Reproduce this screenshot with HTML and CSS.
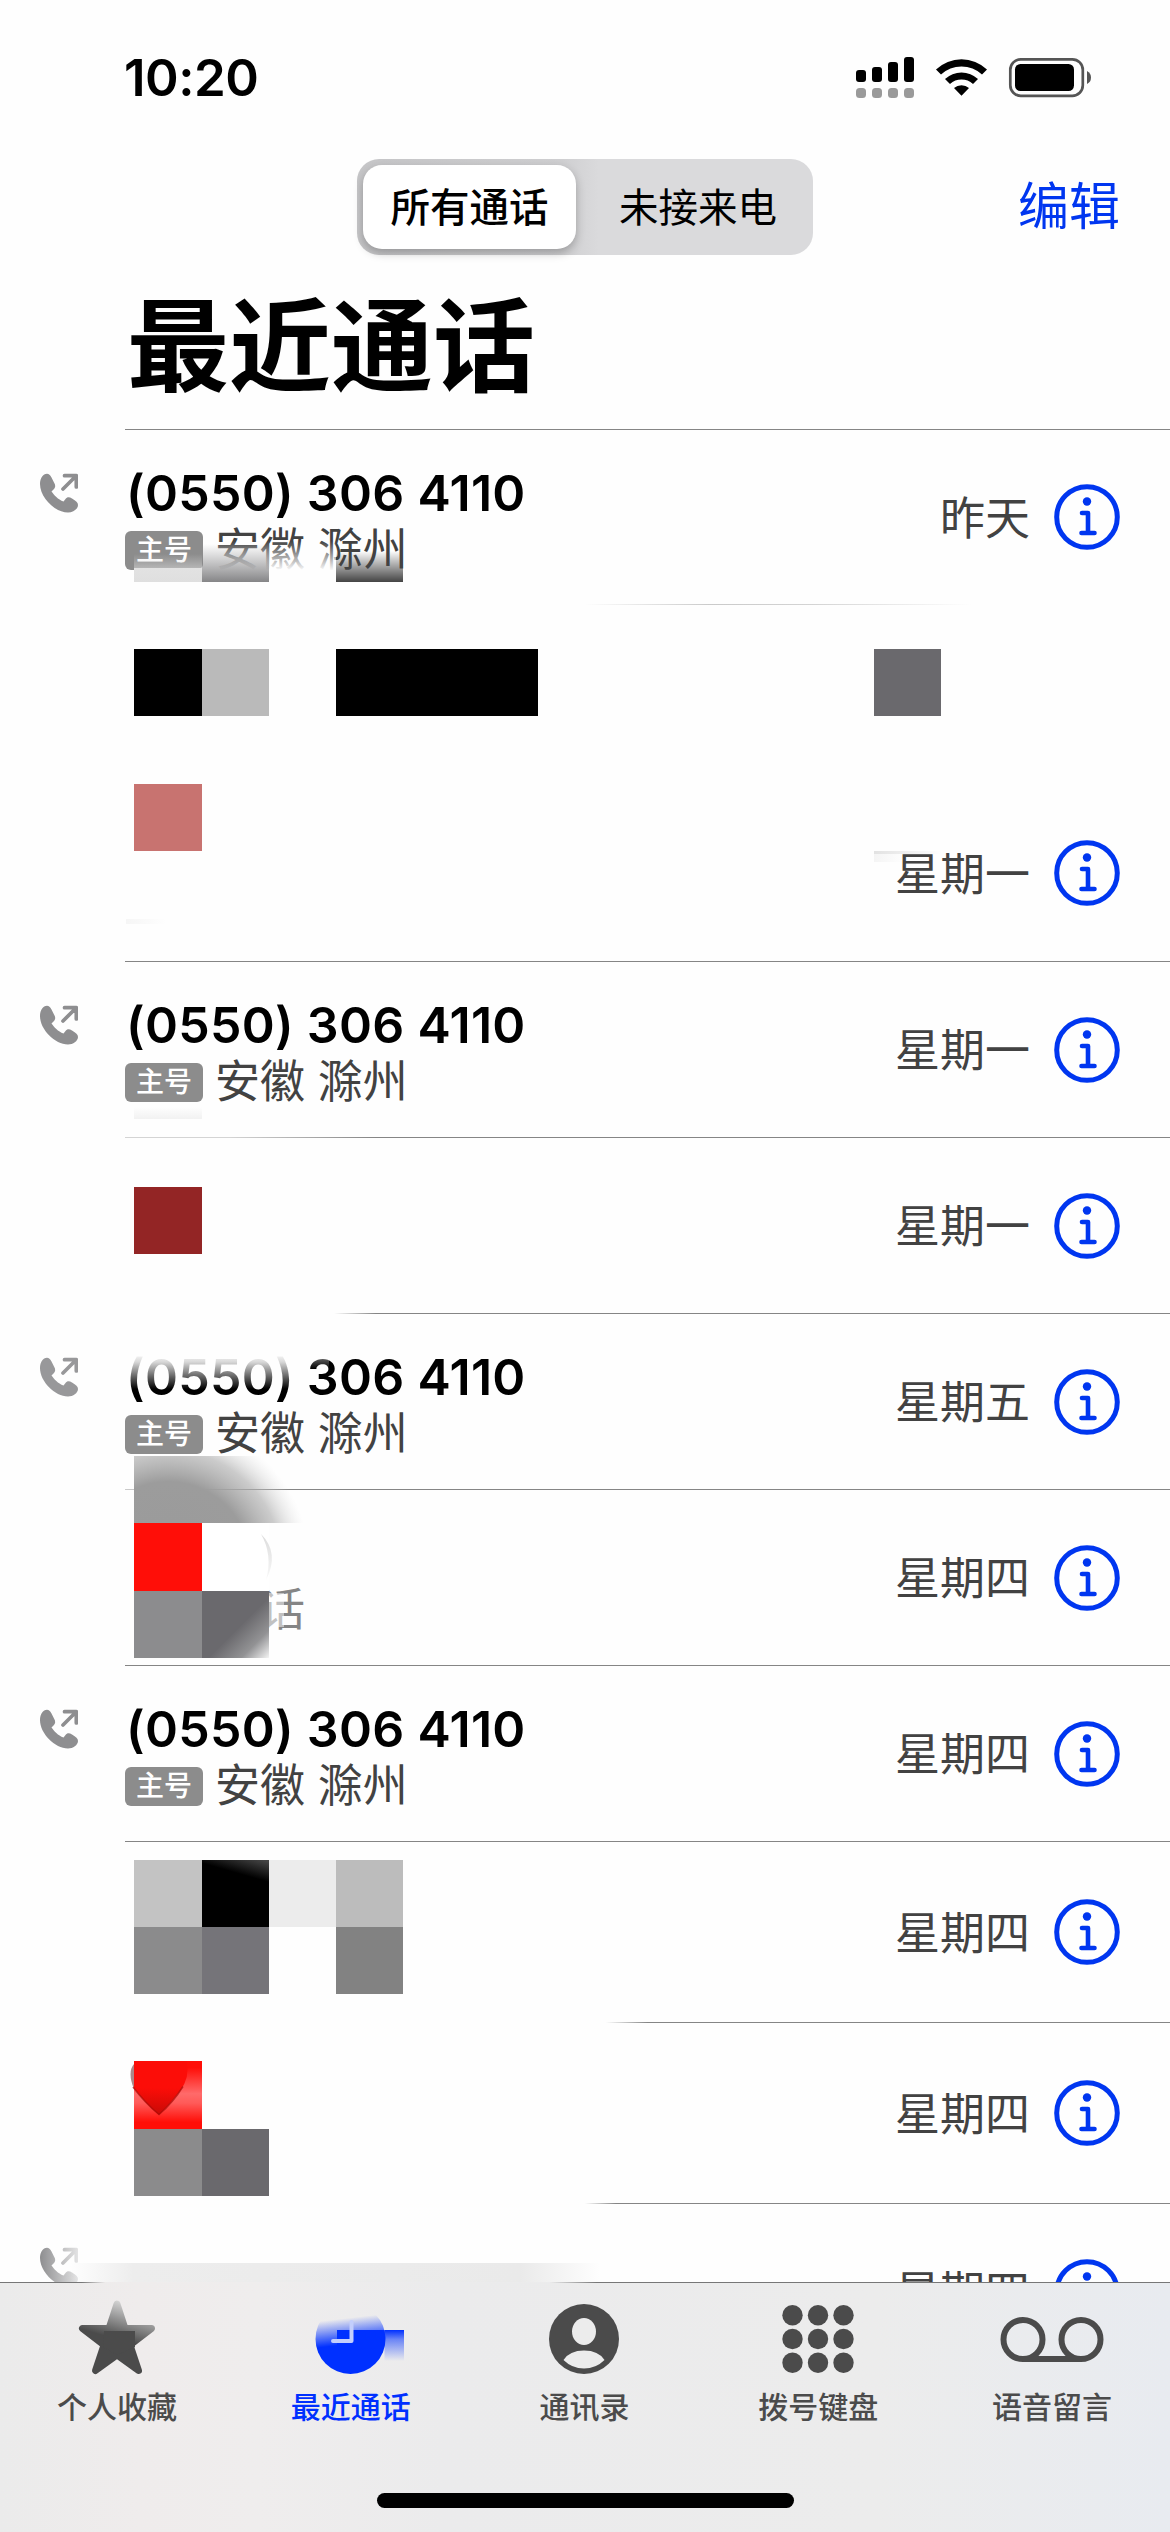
FILE: index.html
```html
<!DOCTYPE html>
<html lang="zh-CN">
<head>
    <meta charset="UTF-8">
    <meta name="viewport" content="width=device-width, initial-scale=1.0">
    <title>最近通话</title>
    <link rel="stylesheet" href="styles.css">
</head>
<body>
    <!-- Shared icons -->
    <svg class="defs" width="0" height="0">
        <symbol id="icon-outgoing" viewBox="0 0 38 39">
            <path fill="currentColor" d="M7 .3C3 .3 0 5 0 10.5 0 24 15 39 28 39c5 0 10-3.5 10-7.500 0-2.500-2-4-6-6.500-3-2-5-1.500-6.500.5L23.500 28C18 26 14 21.500 11.500 18l2-2c2-2 2.300-4 .5-7l-2.500-5C10 1.500 9 .3 7 .3z"/>
            <path fill="none" stroke="currentColor" stroke-width="3.700" stroke-linecap="round" stroke-linejoin="round" d="M23 15.500L36 2.500M24.500 2.200h11.800v11.300"/>
        </symbol>
        <symbol id="icon-info" viewBox="0 0 66 66">
            <circle cx="33" cy="33" r="30.300" fill="none" stroke="currentColor" stroke-width="5"/>
            <circle cx="33" cy="17.500" r="4.200" fill="currentColor"/>
            <path fill="none" stroke="currentColor" stroke-width="4.600" stroke-linecap="round" stroke-linejoin="round" d="M28 29h6v19.500M27.500 49h13"/>
        </symbol>
    </svg>

    <div class="status-bar">
        <div class="time">10:20</div>
        <svg class="status-icons" width="237" height="44" viewBox="0 0 237 44">
            <g>
                <rect x="1" y="15" width="10" height="12" rx="3"/>
                <rect x="17" y="12" width="10" height="15" rx="3"/>
                <rect x="33" y="7" width="10" height="20" rx="3"/>
                <rect x="49" y="2" width="10" height="25" rx="3"/>
            </g>
            <g fill="#9a9a9a">
                <rect x="1" y="33" width="10" height="10" rx="3.500"/>
                <rect x="17" y="33" width="10" height="10" rx="3.500"/>
                <rect x="33" y="33" width="10" height="10" rx="3.500"/>
                <rect x="49" y="33" width="10" height="10" rx="3.500"/>
            </g>
            <path d="M81 14.500a37 37 0 0 1 51 0l-5 5a30 30 0 0 0-41 0zM90 24a24 24 0 0 1 33 0l-5 5a17 17 0 0 0-23 0zM99 33a11.500 11.500 0 0 1 15 0l-7.500 7.800z"/>
            <rect x="155.300" y="4.300" width="72.500" height="36.500" rx="10.500" fill="none" stroke="#555" stroke-width="2.700"/>
            <rect x="160" y="9" width="59" height="27" rx="5.500"/>
            <path d="M232 16q4 2 4 6.500t-4 6.500z" fill="#555"/>
        </svg>
    </div>

    <div class="nav-bar">
        <div class="segmented">
            <div class="segment active">所有通话</div>
            <div class="segment">未接来电</div>
        </div>
        <div class="edit">编辑</div>
    </div>

    <h1>最近通话</h1>

    <div class="call-list">
        <div class="call">
            <div class="call-type"><svg><use href="#icon-outgoing"/></svg></div>
            <div class="call-body">
                <div class="call-main">
                    <div class="number">(0550) 306 4110</div>
                    <div class="place"><span class="badge">主号</span>安徽 滁州</div>
                </div>
                <div class="date">昨天</div>
                <svg class="info"><use href="#icon-info"/></svg>
            </div>
            <svg class="mosaic" viewBox="0 0 1170 175">
                <defs>
                    <linearGradient id="fade-white" x2="0" y2="1">
                        <stop offset="0" stop-color="#fefefe" stop-opacity="0"/>
                        <stop offset="1" stop-color="#fefefe"/>
                    </linearGradient>
                    <linearGradient id="fade-light" x2="0" y2="1">
                        <stop offset="0" stop-color="#dedede" stop-opacity="0"/>
                        <stop offset="1" stop-color="#dfdfdf"/>
                    </linearGradient>
                    <linearGradient id="fade-mid" x2="0" y2="1">
                        <stop offset="0" stop-color="#8e8e90" stop-opacity="0"/>
                        <stop offset="1" stop-color="#858587"/>
                    </linearGradient>
                    <linearGradient id="fade-dark" x2="0" y2="1">
                        <stop offset="0" stop-color="#444" stop-opacity="0"/>
                        <stop offset="1" stop-color="#444"/>
                    </linearGradient>
                </defs>
                <rect x="204" y="112" width="132" height="30" fill="url(#fade-white)"/>
                <rect x="134" y="139" width="68" height="14" fill="#e6e6e6"/>
                <rect x="134" y="125" width="68" height="28" fill="url(#fade-light)"/>
                <rect x="202" y="115" width="67" height="38" fill="url(#fade-mid)"/>
                <rect x="336" y="122" width="67" height="31" fill="url(#fade-dark)"/>
            </svg>
        </div>

        <div class="call tall line-ghost">
            <div class="call-body"></div>
            <svg class="mosaic" viewBox="0 0 1170 180">
                <rect x="134" y="45" width="68" height="67"/>
                <rect x="202" y="45" width="67" height="67" fill="#bababa"/>
                <rect x="336" y="45" width="202" height="67"/>
                <rect x="874" y="45" width="67" height="67" fill="#6a696d"/>
            </svg>
        </div>

        <div class="call line-none">
            <div class="call-body">
                <div class="date">星期一</div>
                <svg class="info"><use href="#icon-info"/></svg>
            </div>
            <svg class="mosaic" viewBox="0 0 1170 177">
                <defs>
                    <linearGradient id="smudge">
                        <stop offset="0" stop-color="#e2e2e2"/>
                        <stop offset="1" stop-color="#e2e2e2" stop-opacity="0"/>
                    </linearGradient>
                </defs>
                <rect x="134" y="0" width="68" height="67" fill="#c87370"/>
                <rect x="874" y="67" width="67" height="3" fill="url(#smudge)"/>
                <rect x="874" y="70" width="30" height="8" fill="url(#smudge)" opacity=".35"/>
                <rect x="126" y="135" width="40" height="5" fill="url(#smudge)" opacity=".3"/>
            </svg>
        </div>

        <div class="call">
            <div class="call-type"><svg><use href="#icon-outgoing"/></svg></div>
            <div class="call-body">
                <div class="call-main">
                    <div class="number">(0550) 306 4110</div>
                    <div class="place"><span class="badge">主号</span>安徽 滁州</div>
                </div>
                <div class="date">星期一</div>
                <svg class="info"><use href="#icon-info"/></svg>
            </div>
            <svg class="mosaic" viewBox="0 0 1170 176">
                <rect x="134" y="146" width="68" height="12" fill="url(#fade-light)" opacity=".4"/>
            </svg>
        </div>

        <div class="call line-soft">
            <div class="call-body">
                <div class="date">星期一</div>
                <svg class="info"><use href="#icon-info"/></svg>
            </div>
            <svg class="mosaic" viewBox="0 0 1170 176">
                <rect x="134" y="50" width="68" height="67" fill="#932525"/>
            </svg>
        </div>

        <div class="call line-late">
            <div class="call-type faded"><svg><use href="#icon-outgoing"/></svg></div>
            <div class="call-body">
                <div class="call-main">
                    <div class="number">(0550) 306 4110</div>
                    <div class="place"><span class="badge">主号</span>安徽 滁州</div>
                </div>
                <div class="date">星期五</div>
                <svg class="info"><use href="#icon-info"/></svg>
            </div>
        </div>

        <div class="call line-under">
            <div class="call-body">
                <div class="call-main">
                    <div class="number"></div>
                    <div class="place clipped">话</div>
                </div>
                <div class="date">星期四</div>
                <svg class="info"><use href="#icon-info"/></svg>
            </div>
            <!-- reaches up over the row above -->
            <svg class="mosaic" viewBox="0 0 1170 176">
                <defs>
                    <linearGradient id="number-fade" x2="0" y2="1">
                        <stop offset="0" stop-color="#fefefe"/>
                        <stop offset=".25" stop-color="#fefefe" stop-opacity=".85"/>
                        <stop offset="1" stop-color="#fefefe" stop-opacity="0"/>
                    </linearGradient>
                    <radialGradient id="shadow" gradientUnits="userSpaceOnUse" cx="168" cy="75" r="142">
                        <stop offset="0" stop-color="#9a9a9a"/>
                        <stop offset=".58" stop-color="#9c9c9c"/>
                        <stop offset=".8" stop-color="#b0b0b0" stop-opacity=".65"/>
                        <stop offset="1" stop-color="#ddd" stop-opacity="0"/>
                    </radialGradient>
                    <linearGradient id="corner" x1=".3" y1=".3" x2="1" y2="1">
                        <stop offset=".35" stop-color="#6a696d"/>
                        <stop offset=".7" stop-color="#929294"/>
                        <stop offset="1" stop-color="#f4f4f4"/>
                    </linearGradient>
                    <linearGradient id="arc-fade" x2="0" y2="1">
                        <stop offset="0" stop-color="#dcdcdc"/>
                        <stop offset="1" stop-color="#f8f8f8"/>
                    </linearGradient>
                </defs>
                <rect x="127" y="-136" width="164" height="36" fill="url(#number-fade)"/>
                <rect x="305" y="-136" width="24" height="16" fill="url(#number-fade)" opacity=".5"/>
                <rect x="134" y="-33" width="180" height="67" fill="url(#shadow)"/>
                <rect x="134" y="34" width="68" height="68" fill="#ff0e08"/>
                <rect x="202" y="34" width="67" height="68" fill="#fff"/>
                <rect x="262" y="104" width="22" height="34" fill="#fefefe" opacity=".5"/>
                <rect x="134" y="102" width="68" height="67" fill="#8c8c8e"/>
                <rect x="202" y="102" width="67" height="67" fill="url(#corner)"/>
                <path d="M261 45q19 19 5 46 7-25-5-46z" fill="url(#arc-fade)"/>
            </svg>
        </div>

        <div class="call">
            <div class="call-type"><svg><use href="#icon-outgoing"/></svg></div>
            <div class="call-body">
                <div class="call-main">
                    <div class="number">(0550) 306 4110</div>
                    <div class="place"><span class="badge">主号</span>安徽 滁州</div>
                </div>
                <div class="date">星期四</div>
                <svg class="info"><use href="#icon-info"/></svg>
            </div>
        </div>

        <div class="call tall">
            <div class="call-body">
                <div class="date">星期四</div>
                <svg class="info"><use href="#icon-info"/></svg>
            </div>
            <svg class="mosaic" viewBox="0 0 1170 181">
                <defs>
                    <linearGradient id="shine" x1=".45" y1=".25" x2=".55" y2="-.1">
                        <stop offset=".2" stop-color="#000"/>
                        <stop offset="1" stop-color="#444"/>
                    </linearGradient>
                </defs>
                <rect x="134" y="19" width="68" height="67" fill="#c3c3c3"/>
                <rect x="202" y="19" width="67" height="67" fill="url(#shine)"/>
                <rect x="269" y="19" width="67" height="67" fill="#ececec"/>
                <rect x="336" y="19" width="67" height="67" fill="#bcbcbc"/>
                <rect x="134" y="86" width="68" height="67" fill="#8b8b8c"/>
                <rect x="202" y="86" width="67" height="67" fill="#757479"/>
                <rect x="336" y="86" width="67" height="67" fill="#828282"/>
            </svg>
        </div>

        <div class="call tall line-half first-half">
            <div class="call-body">
                <div class="date">星期四</div>
                <svg class="info"><use href="#icon-info"/></svg>
            </div>
            <svg class="mosaic" viewBox="0 0 1170 181">
                <defs>
                    <linearGradient id="gloss" x2="0" y2="1">
                        <stop offset=".1" stop-color="#ff0e08"/>
                        <stop offset=".48" stop-color="#ff6a6a"/>
                        <stop offset=".62" stop-color="#ff5a58"/>
                        <stop offset=".9" stop-color="#ff0e08"/>
                    </linearGradient>
                    <linearGradient id="heart" x2="0" y2="1">
                        <stop offset=".5" stop-color="#fc0d08"/>
                        <stop offset="1" stop-color="#c80a06"/>
                    </linearGradient>
                </defs>
                <path d="M134 42q-7 8 0 25z" fill="#a88"/>
                <rect x="134" y="39" width="68" height="68" fill="url(#gloss)"/>
                <path d="M134 39h53q3 17-7 30-10 13-21 24-13-11-25-27z" fill="url(#heart)"/>
                <path d="M133 65q12 16 26 27.500 14-12 24-28" fill="none" stroke="#a80804" stroke-width="1.500" opacity=".7"/>
                <rect x="134" y="107" width="68" height="67" fill="#8b8b8c"/>
                <rect x="202" y="107" width="67" height="67" fill="#6a696d"/>
            </svg>
        </div>

        <div class="call line-half last">
            <div class="call-type"><svg><use href="#icon-outgoing"/></svg></div>
            <div class="call-body">
                <div class="date">星期四</div>
                <svg class="info"><use href="#icon-info"/></svg>
            </div>
            <svg class="mosaic" viewBox="0 0 1170 176">
                <defs>
                    <linearGradient id="blot">
                        <stop offset="0" stop-color="#ededed" stop-opacity="0"/>
                        <stop offset=".12" stop-color="#ededed"/>
                        <stop offset=".85" stop-color="#eaeaea"/>
                        <stop offset="1" stop-color="#eaeaea" stop-opacity="0"/>
                    </linearGradient>
                    <linearGradient id="arrow-fade">
                        <stop offset="0" stop-color="#fefefe" stop-opacity="0"/>
                        <stop offset="1" stop-color="#fefefe" stop-opacity=".8"/>
                    </linearGradient>
                </defs>
                <rect x="40" y="43" width="40" height="37" fill="url(#arrow-fade)"/>
                <rect x="70" y="60" width="530" height="22" fill="url(#blot)"/>
            </svg>
        </div>
    </div>

    <div class="tab-bar">
        <div class="tabs">
            <div class="tab">
                <svg viewBox="0 0 104 76">
                    <defs>
                        <linearGradient id="star-fill" gradientUnits="userSpaceOnUse" x1="58" y1="2" x2="48" y2="38">
                            <stop offset="0" stop-color="#d4d4d4"/>
                            <stop offset=".6" stop-color="#828282"/>
                            <stop offset="1" stop-color="#4b4b4b"/>
                        </linearGradient>
                    </defs>
                    <path fill="url(#star-fill)" stroke="url(#star-fill)" stroke-width="7" stroke-linejoin="round" d="M52 4l8 24.500h26.500L65 45l8.500 25.500L52 55 30.500 70.500 39 45 17.500 28.500H44z"/>
                    <path d="M39 31h31v16l-18 8-14-8z"/>
                </svg>
                <span>个人收藏</span>
            </div>
            <div class="tab active">
                <svg viewBox="0 0 104 76">
                    <defs>
                        <linearGradient id="clock-fill" gradientUnits="userSpaceOnUse" x1="40" y1="19" x2="43" y2="45">
                            <stop offset="0" stop-color="#0030ff" stop-opacity="0"/>
                            <stop offset="1" stop-color="#0030ff"/>
                        </linearGradient>
                        <linearGradient id="drip" x2="0" y2="1">
                            <stop offset="0" stop-color="#0030ff"/>
                            <stop offset=".3" stop-color="#0030ff" stop-opacity=".55"/>
                            <stop offset="1" stop-color="#0030ff" stop-opacity="0"/>
                        </linearGradient>
                    </defs>
                    <circle cx="51.500" cy="39" r="35" fill="url(#clock-fill)"/>
                    <path d="M38 30h47.500q3 15-6 27-10 14-28 16-8 0-13.500-3z" fill="#0030ff"/>
                    <rect x="85.500" y="30" width="19.500" height="31" fill="url(#drip)"/>
                    <path d="M52.500 22v19H34" fill="none" stroke="#c3cefc" stroke-width="4" stroke-linecap="round" stroke-linejoin="round"/>
                </svg>
                <span>最近通话</span>
            </div>
            <div class="tab">
                <svg viewBox="0 0 104 76">
                    <circle cx="52" cy="39" r="35"/>
                    <ellipse cx="52" cy="31.500" rx="12" ry="13.500" fill="#ececec"/>
                    <path d="M31.500 60q6-9.500 20.500-9.500T72.500 60Q64 68.500 52 68.500T31.500 60z" fill="#ececec"/>
                </svg>
                <span>通讯录</span>
            </div>
            <div class="tab">
                <svg viewBox="0 0 104 76">
                    <circle cx="26.500" cy="15.300" r="10.200"/>
                    <circle cx="52" cy="15.300" r="10.200"/>
                    <circle cx="77.500" cy="15.300" r="10.200"/>
                    <circle cx="26.500" cy="39" r="10.200"/>
                    <circle cx="52" cy="39" r="10.200"/>
                    <circle cx="77.500" cy="39" r="10.200"/>
                    <circle cx="26.500" cy="62.800" r="10.200"/>
                    <circle cx="52" cy="62.800" r="10.200"/>
                    <circle cx="77.500" cy="62.800" r="10.200"/>
                </svg>
                <span>拨号键盘</span>
            </div>
            <div class="tab">
                <svg viewBox="0 0 104 76">
                    <g fill="none" stroke="currentColor" stroke-width="6">
                        <circle cx="23" cy="39.500" r="19.500"/>
                        <circle cx="81" cy="39.500" r="19.500"/>
                        <path d="M23 59h58"/>
                    </g>
                </svg>
                <span>语音留言</span>
            </div>
        </div>
        <div class="home-indicator"></div>
    </div>
</body>
</html>
```
FILE: styles.css
```css
* {
    box-sizing: border-box;
}
body {
    font-family: Inter, "Noto Sans CJK SC", sans-serif;
    background-color: #fefefe;
    color: #000;
    margin: 0;
    height: 2532px;
    overflow: hidden;
    display: flex;
    flex-direction: column;
}
svg {
    display: block;
    fill: currentColor;
}
.defs {
    position: absolute;
}
.status-bar {
    height: 159px;
    flex: none;
    display: flex;
    justify-content: space-between;
    padding: 46px 78px 0 124px;
}
.time {
    font-size: 51px;
    font-weight: 600;
    line-height: 64px;
    letter-spacing: -0.5px;
}
.status-icons {
    margin-top: 9px;
}
.nav-bar {
    height: 96px;
    flex: none;
    display: grid;
    grid-template-columns: 357px 456px 1fr;
    align-items: center;
}
.segmented {
    grid-column: 2;
    height: 96px;
    padding: 6px;
    display: flex;
    background: linear-gradient(90deg, #c6c6c8 0, #cfcfd1 45%, #dadadc 53%);
    border-radius: 22px;
}
.segment {
    flex: 1;
    font-size: 39.5px;
    font-weight: 400;
    line-height: 86px;
    text-align: center;
    padding-left: 13px;
}
.segment.active {
    flex: 0 0 213px;
    height: 84px;
    padding-left: 0;
    font-weight: 500;
    background-color: #fff;
    border-radius: 19px;
    box-shadow: 0 4px 10px rgba(0, 0, 0, 0.25);
}
.edit {
    justify-self: end;
    padding-right: 50px;
    font-size: 51px;
    line-height: 92px;
    color: #0036f0;
}
h1 {
    flex: none;
    height: 174px;
    margin: 0;
    padding: 17px 0 0 127px;
    font-size: 102px;
    font-weight: 700;
    line-height: 150px;
}

/* Call list */
.call-list {
    flex: none;
    height: 1853px;
    overflow: hidden;
}
.call {
    position: relative;
    height: 176px;
    padding-left: 125px;
    display: flex;
}
.call:first-child {
    height: 175px;
}
.call.line-none {
    height: 177px;
}
.call.tall {
    height: 181px;
}
.call.tall.line-ghost {
    height: 180px;
}
.call-type {
    width: 38px;
    margin: 44px 47px 0 -85px;
    color: #8e8e90;
}
.call-type svg {
    width: 38px;
    height: 40px;
}
.call-type.faded {
    opacity: 0.9;
}
.call-body {
    flex: 1;
    display: flex;
    align-items: center;
    justify-content: flex-end;
    background: linear-gradient(#858585, #858585) no-repeat 0 0 / 100% 1px;
}
.line-none .call-body {
    background: none;
}
.line-ghost .call-body {
    background-image: linear-gradient(90deg, transparent 44%, #cacaca 56%, #d4d4d4 66%, transparent 81%);
}
.line-soft .call-body {
    background-image: linear-gradient(90deg, #d4d4d4 10%, #858585 24%);
}
.line-late .call-body {
    background-image: linear-gradient(90deg, transparent 20%, #858585 24%);
}
.line-under .call-body {
    background-image: linear-gradient(90deg, #ccc, #858585 12%);
}
.line-half .call-body {
    background-image: linear-gradient(90deg, transparent 44%, #858585 47%);
}
.line-half.first-half .call-body {
    background-image: linear-gradient(90deg, transparent 46%, #858585 50%);
}
.call-main {
    flex: 1;
    align-self: flex-start;
    padding-top: 36px;
}
.number {
    height: 56px;
    padding-left: 1px;
    font-size: 50px;
    font-weight: 600;
    line-height: 56px;
    letter-spacing: 0.3px;
    white-space: nowrap;
}
.place {
    height: 42px;
    margin-top: 8px;
    display: flex;
    align-items: center;
    font-size: 45px;
    line-height: 44px;
    color: #424242;
    white-space: pre;
}
.place.clipped {
    padding-left: 135px;
    color: #858585;
}
.badge {
    width: 78px;
    height: 39px;
    margin-right: 12px;
    background-color: #8c8c8c;
    border-radius: 6px;
    color: #fff;
    font-size: 28px;
    font-weight: 500;
    line-height: 38px;
    text-align: center;
}
.date {
    margin-right: 24px;
    padding-top: 4px;
    font-size: 45px;
    line-height: 60px;
    color: #424242;
}
.info {
    width: 66px;
    height: 66px;
    margin-top: 1px;
    margin-right: 50px;
    color: #0036f0;
}
.mosaic {
    position: absolute;
    top: 0;
    left: 0;
    width: 1170px;
    height: 100%;
    overflow: visible;
    fill: #000;
}

/* Bottom tabs */
.tab-bar {
    flex: 1;
    padding-top: 1px;
    background:
        linear-gradient(90deg, #777 7%, transparent 9%, transparent 47%, #777 51%) no-repeat 0 0 / 100% 1px,
        linear-gradient(90deg, #ebebeb 0%, #efecec 12%, #efeded 22%, #ebebec 38%, #ececec 75%, #e8ebf0 100%);
    display: flex;
    flex-direction: column;
    align-items: center;
}
.tabs {
    width: 100%;
    height: 210px;
    padding: 17px 1px 0 0;
    display: flex;
}
.tab {
    flex: 1;
    display: flex;
    flex-direction: column;
    align-items: center;
    font-size: 30px;
    font-weight: 500;
    line-height: 40px;
    color: #4b4b4b;
}
.tab svg {
    width: 104px;
    height: 76px;
    margin-bottom: 11px;
    overflow: visible;
}
.tab.active {
    color: #0030ff;
}
.home-indicator {
    width: 417px;
    height: 15px;
    background-color: #000;
    border-radius: 8px;
}
```
